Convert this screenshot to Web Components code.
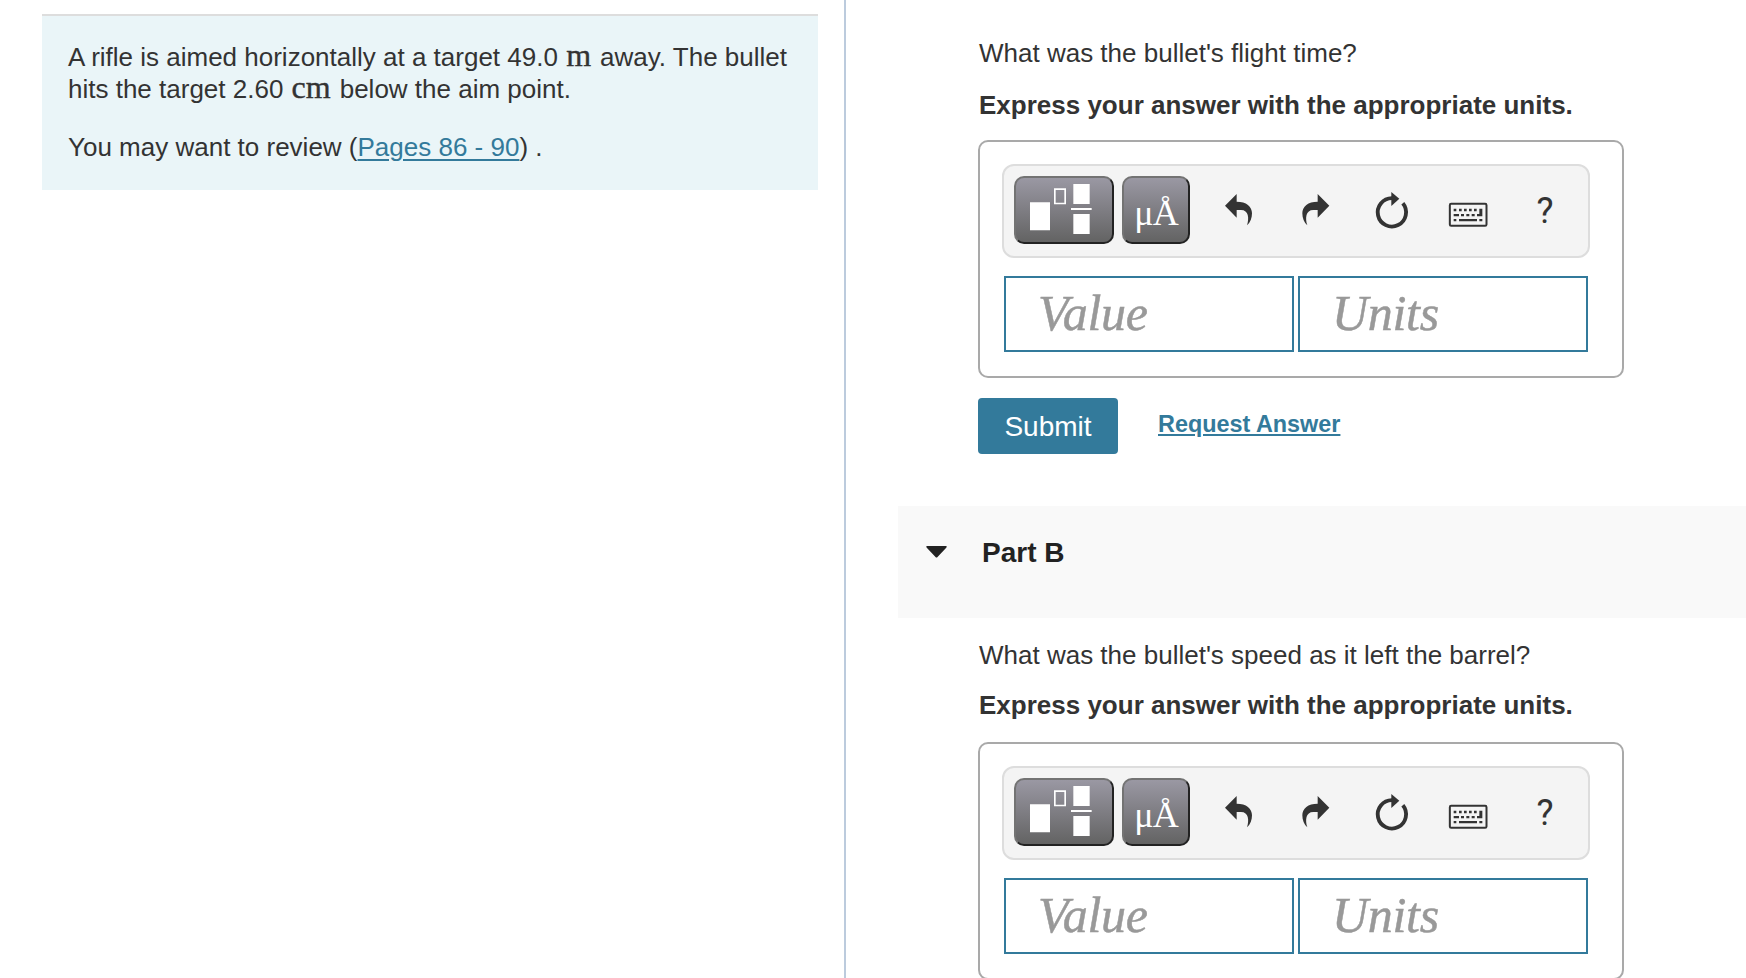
<!DOCTYPE html>
<html lang="en">
<head>
<meta charset="utf-8">
<title>Projectile motion</title>
<style>
  html, body {
    margin: 0;
    height: 100%;
    overflow: hidden;
    background: #fff;
  }
  body {
    font-family: "Liberation Sans", Arial, sans-serif;
    font-size: 26px;
    line-height: 32px;
    color: #333;
    --accent: #337a9b;
  }
</style>
</head>
<body>
<hw-layout>
  <hw-intro slot="left">
    <p>A rifle is aimed horizontally at a target 49.0 <hw-unit>m</hw-unit> away. The bullet<br>hits the target 2.60 <hw-unit>cm</hw-unit> below the aim point.</p>
    <p>You may want to review (<a>Pages 86 - 90</a>) .</p>
  </hw-intro>
  <hw-question slot="right" class="first">
    <span slot="ask">What was the bullet's flight time?</span>
    <span slot="hint">Express your answer with the appropriate units.</span>
    <hw-answer></hw-answer>
  </hw-question>
  <hw-submit slot="right"></hw-submit>
  <hw-part-header slot="right">Part B</hw-part-header>
  <hw-question slot="right" class="second">
    <span slot="ask">What was the bullet's speed as it left the barrel?</span>
    <span slot="hint">Express your answer with the appropriate units.</span>
    <hw-answer></hw-answer>
  </hw-question>
</hw-layout>

<script>
class HwLayout extends HTMLElement {
  connectedCallback() {
    if (this.shadowRoot) return;
    const root = this.attachShadow({ mode: "open" });
    root.innerHTML = `
      <style>
        :host {
          display: grid;
          grid-template-columns: 844px 1fr;
          height: 978px;
          overflow: hidden;
        }
        .left {
          padding: 14px 26px 0 42px;
        }
        .right {
          border-left: 2px solid #bccbdd;
          padding-left: 52px;
          min-width: 0;
          min-height: 0;
        }
        ::slotted(.first) {
          padding-top: 37px;
          --ask-gap: 20px;
          --hint-gap: 19px;
        }
        ::slotted(.second) {
          padding-top: 21px;
          --ask-gap: 18px;
          --hint-gap: 21px;
        }
      </style>
      <div class="left"><slot name="left"></slot></div>
      <div class="right"><slot name="right"></slot></div>
    `;
  }
}

class HwIntro extends HTMLElement {
  connectedCallback() {
    if (this.shadowRoot) return;
    const root = this.attachShadow({ mode: "open" });
    root.innerHTML = `
      <style>
        :host {
          display: flex;
          flex-direction: column;
          gap: 26px;
          box-sizing: border-box;
          height: 176px;
          padding: 25px 0 0 26px;
          border-top: 2px solid #ddd;
          background: #eaf5f8;
          white-space: nowrap;
        }
        ::slotted(p) {
          margin: 0;
        }
      </style>
      <slot></slot>
    `;
    // nested links sit below the slotted paragraphs, so style them here
    for (const a of this.querySelectorAll("a")) {
      a.style.cssText = "color: var(--accent); text-decoration: underline 2px; text-underline-offset: 3px";
    }
  }
}

class HwUnit extends HTMLElement {
  connectedCallback() {
    if (this.shadowRoot) return;
    const root = this.attachShadow({ mode: "open" });
    root.innerHTML = `
      <style>
        :host {
          display: inline;
          margin: 0 1px;
          font-family: "Liberation Serif", serif;
          font-size: 32px;
          line-height: 0;
          -webkit-text-stroke: 0.4px;
        }
      </style>
      <slot></slot>
    `;
  }
}

class HwQuestion extends HTMLElement {
  connectedCallback() {
    if (this.shadowRoot) return;
    const root = this.attachShadow({ mode: "open" });
    root.innerHTML = `
      <style>
        :host {
          display: block;
          padding-left: 80px;
          white-space: nowrap;
        }
        .ask {
          padding-left: 1px;
          margin-bottom: var(--ask-gap);
        }
        .hint {
          padding-left: 1px;
          font-weight: 700;
          margin-bottom: var(--hint-gap);
        }
      </style>
      <div class="ask"><slot name="ask"></slot></div>
      <div class="hint"><slot name="hint"></slot></div>
      <slot></slot>
    `;
  }
}

class HwAnswer extends HTMLElement {
  connectedCallback() {
    if (this.shadowRoot) return;
    const root = this.attachShadow({ mode: "open" });
    root.innerHTML = `
      <style>
        :host {
          display: block;
          box-sizing: border-box;
          width: 646px;
          height: 238px;
          padding: 22px;
          border: 2px solid #a9a9a9;
          border-radius: 10px;
        }
        .fields {
          display: flex;
          gap: 4px;
          margin: 18px 0 0 2px;
        }
      </style>
      <hw-toolbar></hw-toolbar>
      <div class="fields">
        <hw-field>Value</hw-field>
        <hw-field>Units</hw-field>
      </div>
    `;
  }
}

class HwToolbar extends HTMLElement {
  connectedCallback() {
    if (this.shadowRoot) return;
    const root = this.attachShadow({ mode: "open" });
    root.innerHTML = `
      <style>
        :host {
          display: flex;
          box-sizing: border-box;
          width: 588px;
          height: 94px;
          padding: 10px 0 0 10px;
          border: 2px solid #ddd;
          border-radius: 12px;
          background: #f4f4f4;
        }
        .btn {
          box-sizing: border-box;
          height: 68px;
          margin-right: 8px;
          border: 2px solid;
          border-color: #737373 #222 #222 #737373;
          border-radius: 10px;
          background: linear-gradient(#9a98a3, #636363);
          color: #fff;
        }
        .templates { width: 100px; }
        .symbols {
          width: 68px;
          margin-right: 10px;
          font: 36px/71px "Liberation Serif", serif;
          letter-spacing: -1px;
          text-align: center;
        }
        svg { display: block; }
        .icon {
          width: 76px;
          height: 64px;
          fill: #333;
        }
        .help {
          width: 82px;
          font: 400 36px/70px Roboto, sans-serif;
          text-align: center;
        }
      </style>
      <div class="btn templates">
        <svg width="96" height="64" viewBox="138 144 288 192" fill="#fff">
          <path d="M180 217h60v84h-60zM310 162h49v60h-49zM303 234h62v6h-62zM310 252h49v60h-49z"/>
          <path d="M254.500 177.500h31v43h-31z" fill="none" stroke="#fff" stroke-width="5"/>
        </svg>
      </div>
      <div class="btn symbols">μÅ</div>
      <svg class="icon" viewBox="0 18 228 192">
        <path d="M75 107L110 72V95C139 95 156 109 156 130C156 145 151 158 141 166C148 145 146 120 123 120H110V143Z"/>
      </svg>
      <svg class="icon" viewBox="227 18 228 192">
        <path d="M387 107L352 72V95C323 95 306 109 306 130C306 145 311 158 321 166C314 145 316 120 339 120H352V143Z"/>
      </svg>
      <svg class="icon" viewBox="456 18 228 192">
        <path d="M608.500 100A42.500 42.500 0 1 1 576 84.500" fill="none" stroke="#333" stroke-width="11.500"/>
        <path d="M574 66L598 86L574 108Z"/>
      </svg>
      <svg class="icon" viewBox="84 18 228 192">
        <rect x="149.500" y="101.500" width="110" height="66" rx="4" fill="none" stroke="#333" stroke-width="6"/>
        <path d="M161 116h8v8h-8zM177 116h8v8h-8zM192 116h8v8h-8zM207 116h8v8h-8zM222 116h8v8h-8zM238 116h9v23h-16v-7h7zM161 132h16v7h-16zM183 132h9v7h-9zM199 132h9v7h-9zM215 132h9v7h-9zM161 147h8v7h-8zM177 147h54v7h-54zM238 147h9v7h-9z"/>
      </svg>
      <div class="help">?</div>
    `;
  }
}

class HwField extends HTMLElement {
  connectedCallback() {
    if (this.shadowRoot) return;
    const root = this.attachShadow({ mode: "open" });
    root.innerHTML = `
      <style>
        :host {
          display: block;
          box-sizing: border-box;
          width: 290px;
          height: 76px;
          padding-left: 32px;
          border: 2px solid var(--accent);
          background: #fff;
          color: #999;
          font: italic 50px/71px "Liberation Serif", serif;
          letter-spacing: -0.3px;
          -webkit-text-stroke: 0.5px;
        }
      </style>
      <slot></slot>
    `;
  }
}

class HwSubmit extends HTMLElement {
  connectedCallback() {
    if (this.shadowRoot) return;
    const root = this.attachShadow({ mode: "open" });
    root.innerHTML = `
      <style>
        :host {
          display: flex;
          gap: 40px;
          padding: 20px 0 52px 80px;
        }
        .submit {
          width: 140px;
          height: 56px;
          border-radius: 4px;
          background: var(--accent);
          color: #fff;
          font-size: 28px;
          line-height: 58px;
          text-align: center;
        }
        .request {
          color: var(--accent);
          font-size: 23.4px;
          font-weight: 700;
          line-height: 52px;
          text-decoration: underline 2px;
          text-underline-offset: 2px;
        }
      </style>
      <div class="submit">Submit</div>
      <a class="request">Request Answer</a>
    `;
  }
}

class HwPartHeader extends HTMLElement {
  connectedCallback() {
    if (this.shadowRoot) return;
    const root = this.attachShadow({ mode: "open" });
    root.innerHTML = `
      <style>
        :host {
          display: flex;
          gap: 35px;
          box-sizing: border-box;
          height: 112px;
          padding: 30px 0 0 28px;
          background: #f9f9f9;
          color: #222;
          font-size: 28px;
          font-weight: 700;
          line-height: 34px;
        }
        svg {
          width: 21px;
          height: 12px;
          margin-top: 10px;
          fill: #222;
        }
      </style>
      <svg viewBox="0 0 21 12"><path d="M1 0H20Q21.500 .5 20 2L11.500 11Q10.500 12 9.500 11L1 2Q-.5 .5 1 0Z"/></svg>
      <slot></slot>
    `;
  }
}

customElements.define("hw-layout", HwLayout);
customElements.define("hw-intro", HwIntro);
customElements.define("hw-unit", HwUnit);
customElements.define("hw-question", HwQuestion);
customElements.define("hw-answer", HwAnswer);
customElements.define("hw-toolbar", HwToolbar);
customElements.define("hw-field", HwField);
customElements.define("hw-submit", HwSubmit);
customElements.define("hw-part-header", HwPartHeader);
</script>
</body>
</html>
